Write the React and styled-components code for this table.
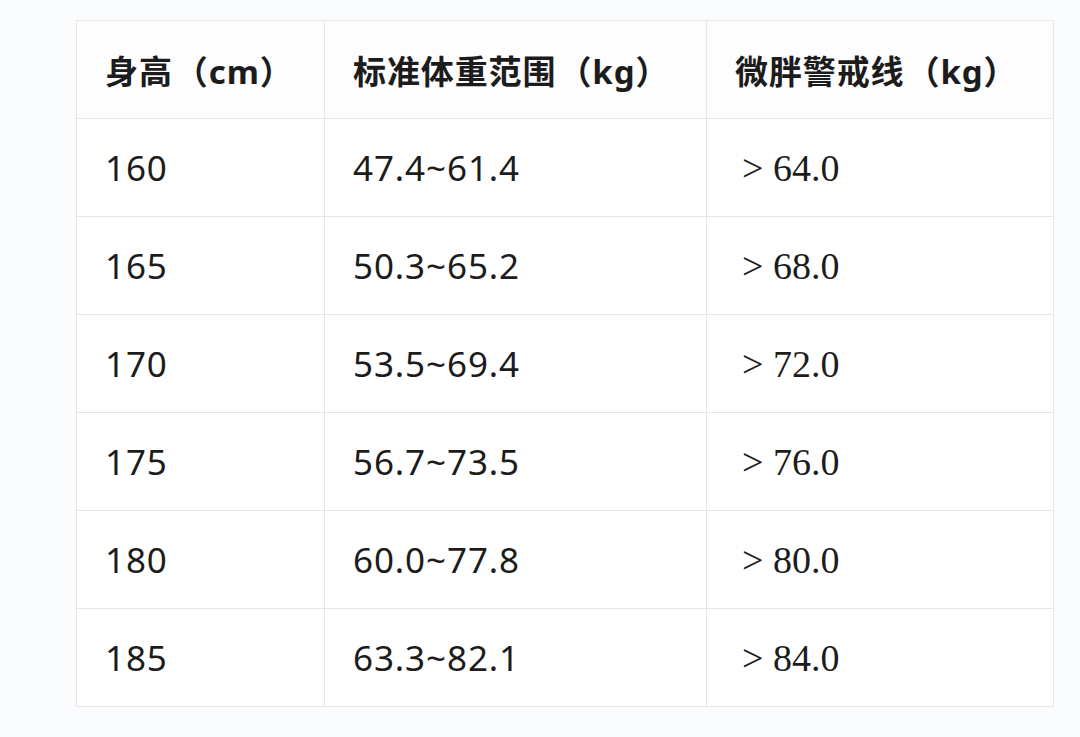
import React from 'react';
import styled, { createGlobalStyle } from 'styled-components';

const GlobalStyle = createGlobalStyle`
  html, body {
    margin: 0;
    padding: 0;
    background: #fbfcfd;
  }
  body {
    font-family: "Noto Sans", "Noto Sans CJK SC", sans-serif;
    color: #1f1f1f;
  }
`;

const Page = styled.div`
  width: 1080px;
  height: 737px;
  padding: 20px 0 0 76px;
  box-sizing: border-box;
`;

const Table = styled.div`
  display: grid;
  grid-template-columns: 248px 382px 347px;
  grid-auto-rows: 98px;
  width: 978px;
  border-top: 1px solid #e4e6ea;
  border-left: 1px solid #e4e6ea;
  background: #ffffff;
  box-sizing: border-box;
`;

const Cell = styled.div`
  display: flex;
  align-items: center;
  padding-left: ${(p) => (p.serif ? 35 : 28)}px;
  border-right: 1px solid #e4e6ea;
  border-bottom: 1px solid #e4e6ea;
  background: ${(p) => (p.head ? '#fdfdfe' : '#ffffff')};
  font-family: ${(p) =>
    p.serif ? '"Liberation Serif", serif' : '"Noto Sans", "Noto Sans CJK SC", sans-serif'};
  font-size: ${(p) => (p.head ? 33 : p.serif ? 38 : 35)}px;
  font-weight: ${(p) => (p.head ? 700 : 400)};
  color: #1c1c1c;
  white-space: nowrap;
  letter-spacing: ${(p) => (p.head ? '0.9px' : p.serif ? '0' : '0.9px')};
`;

const Paren = styled.span`
  margin: 0 2px;
`;

const headers = [
  ['身高', 'cm'],
  ['标准体重范围', 'kg'],
  ['微胖警戒线', 'kg'],
];

const rows = [
  ['160', '47.4~61.4', '> 64.0'],
  ['165', '50.3~65.2', '> 68.0'],
  ['170', '53.5~69.4', '> 72.0'],
  ['175', '56.7~73.5', '> 76.0'],
  ['180', '60.0~77.8', '> 80.0'],
  ['185', '63.3~82.1', '> 84.0'],
];

const App = () => (
  <>
    <GlobalStyle />
    <Page>
      <Table>
        {headers.map(([label, unit]) => (
          <Cell head key={label}>
            {label}
            <Paren>（{unit}）</Paren>
          </Cell>
        ))}
        {rows.map((row) => (
          <React.Fragment key={row[0]}>
            <Cell>{row[0]}</Cell>
            <Cell>{row[1]}</Cell>
            <Cell serif>{row[2]}</Cell>
          </React.Fragment>
        ))}
      </Table>
    </Page>
  </>
);

export default App;
